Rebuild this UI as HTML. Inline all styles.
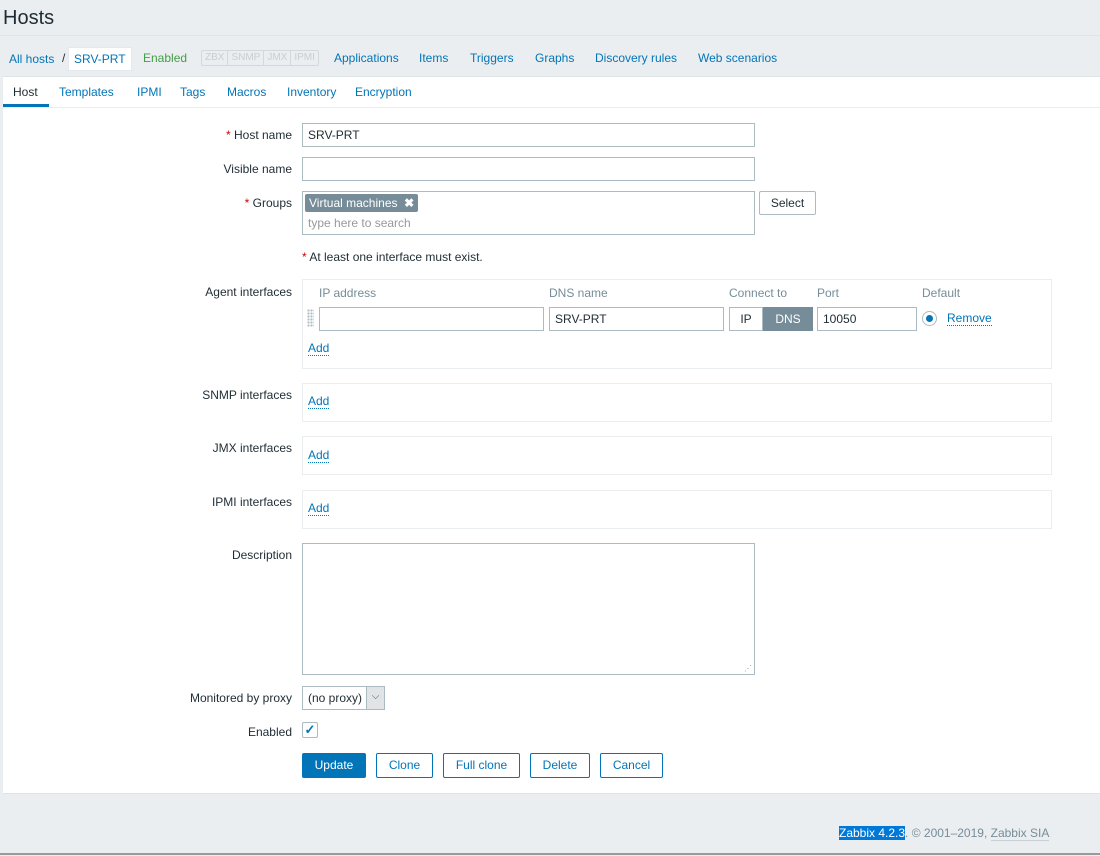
<!DOCTYPE html>
<html><head><meta charset="utf-8"><style>
*{box-sizing:border-box;margin:0;padding:0}
body{width:1100px;height:856px;background:#ebeef0;font-family:"Liberation Sans",Arial,sans-serif;font-size:12px;color:#1f2c33;position:relative;overflow:hidden}
.a{position:absolute;white-space:nowrap}
.lnk{color:#0275b8}
.inp{position:absolute;border:1px solid #acbbc2;background:#fff;height:24px;padding:4px 5px;font-size:12px;line-height:14px}
.lbl{position:absolute;right:808px;text-align:right;white-space:nowrap}
.box{position:absolute;left:302px;width:750px;border:1px solid #ebeef0;background:#fff}
.add{position:absolute;color:#0275b8;border-bottom:1px dotted #0275b8;line-height:13px}
.btn{position:absolute;top:753px;height:25px;border:1px solid #0275b8;color:#0275b8;background:#fff;text-align:center;line-height:23px;border-radius:2px}
.red{color:#d40000}
</style></head><body>
<div class="a" style="left:3px;top:7px;font-size:20px;color:#1f2c33">Hosts</div>
<div class="a" style="left:0;top:35px;width:1100px;border-top:1px solid #dfe4e7"></div>
<div class="a lnk" style="left:9px;top:52px">All hosts</div>
<div class="a" style="left:62px;top:51px">/</div>
<div class="a lnk" style="left:68px;top:47px;background:#fff;border:1px solid #e6e9eb;padding:4px 5px">SRV-PRT</div>
<div class="a" style="left:143px;top:51px;color:#429e47">Enabled</div>
<div class="a" style="left:201px;top:50px;height:16px;border:1px solid #d3d8db;border-radius:2px;font-size:10px;color:#c9ced1;line-height:14px;display:flex">
<span style="padding:0 3px;border-right:1px solid #d3d8db">ZBX</span><span style="padding:0 3px;border-right:1px solid #d3d8db">SNMP</span><span style="padding:0 3px;border-right:1px solid #d3d8db">JMX</span><span style="padding:0 3px">IPMI</span></div>
<div class="a lnk" style="left:334px;top:51px">Applications</div>
<div class="a lnk" style="left:419px;top:51px">Items</div>
<div class="a lnk" style="left:470px;top:51px">Triggers</div>
<div class="a lnk" style="left:535px;top:51px">Graphs</div>
<div class="a lnk" style="left:595px;top:51px">Discovery rules</div>
<div class="a lnk" style="left:698px;top:51px">Web scenarios</div>

<div class="a" style="left:3px;top:76px;width:1097px;height:718px;background:#fff;border-top:1px solid #dfe4e7;border-bottom:1px solid #dfe4e7"></div>
<div class="a" style="left:3px;top:107px;width:1097px;border-top:1px solid #ebeef0"></div>
<div class="a" style="left:3px;top:104px;width:46px;height:3px;background:#0275b8"></div>
<div class="a" style="left:13px;top:85px">Host</div>
<div class="a lnk" style="left:59px;top:85px">Templates</div>
<div class="a lnk" style="left:137px;top:85px">IPMI</div>
<div class="a lnk" style="left:180px;top:85px">Tags</div>
<div class="a lnk" style="left:227px;top:85px">Macros</div>
<div class="a lnk" style="left:287px;top:85px">Inventory</div>
<div class="a lnk" style="left:355px;top:85px">Encryption</div>

<div class="lbl" style="top:128px"><span class="red">*</span> Host name</div>
<div class="inp" style="left:302px;top:123px;width:453px">SRV-PRT</div>
<div class="lbl" style="top:162px">Visible name</div>
<div class="inp" style="left:302px;top:157px;width:453px"></div>
<div class="lbl" style="top:196px"><span class="red">*</span> Groups</div>
<div class="a" style="left:302px;top:191px;width:453px;height:44px;border:1px solid #acbbc2;background:#fff"></div>
<div class="a" style="left:305px;top:194px;height:18px;background:#768d99;color:#fff;padding:2px 4px;line-height:14px;border-radius:2px">Virtual machines &nbsp;<b>✖</b></div>
<div class="a" style="left:308px;top:216px;color:#999">type here to search</div>
<div class="a" style="left:759px;top:191px;width:57px;height:24px;border:1px solid #acbbc2;border-radius:2px;text-align:center;line-height:22px;background:#fff">Select</div>
<div class="a" style="left:302px;top:250px"><span class="red">*</span> At least one interface must exist.</div>

<div class="lbl" style="top:285px">Agent interfaces</div>
<div class="box" style="top:279px;height:90px"></div>
<div class="a" style="left:319px;top:286px;color:#768d99">IP address</div>
<div class="a" style="left:549px;top:286px;color:#768d99">DNS name</div>
<div class="a" style="left:729px;top:286px;color:#768d99">Connect to</div>
<div class="a" style="left:817px;top:286px;color:#768d99">Port</div>
<div class="a" style="left:922px;top:286px;color:#768d99">Default</div>
<div class="a" style="left:307px;top:309px;width:7px;height:18px;background:radial-gradient(circle,#acbbc2 1px,transparent 1.2px) 0 0/3px 3px"></div>
<div class="inp" style="left:319px;top:307px;width:225px"></div>
<div class="inp" style="left:549px;top:307px;width:175px">SRV-PRT</div>
<div class="a" style="left:729px;top:307px;width:34px;height:24px;border:1px solid #acbbc2;text-align:center;line-height:22px">IP</div>
<div class="a" style="left:763px;top:307px;width:50px;height:24px;background:#768d99;color:#fff;text-align:center;line-height:24px">DNS</div>
<div class="inp" style="left:817px;top:307px;width:100px">10050</div>
<div class="a" style="left:922px;top:311px;width:15px;height:15px;border:1px solid #acbbc2;border-radius:50%;background:#fff"><div style="margin:3px;width:7px;height:7px;border-radius:50%;background:#0275b8"></div></div>
<div class="add" style="left:947px;top:312px">Remove</div>
<div class="add" style="left:308px;top:342px">Add</div>

<div class="lbl" style="top:388px">SNMP interfaces</div>
<div class="box" style="top:383px;height:39px"></div>
<div class="add" style="left:308px;top:395px">Add</div>
<div class="lbl" style="top:441px">JMX interfaces</div>
<div class="box" style="top:436px;height:39px"></div>
<div class="add" style="left:308px;top:449px">Add</div>
<div class="lbl" style="top:495px">IPMI interfaces</div>
<div class="box" style="top:490px;height:39px"></div>
<div class="add" style="left:308px;top:502px">Add</div>

<div class="lbl" style="top:548px">Description</div>
<div class="a" style="left:302px;top:543px;width:453px;height:132px;border:1px solid #acbbc2;background:#fff"></div>
<div class="a" style="left:744px;top:664px;font-size:8px;color:#999">⋰</div>

<div class="lbl" style="top:691px">Monitored by proxy</div>
<div class="a" style="left:302px;top:686px;width:83px;height:24px;border:1px solid #acbbc2;background:#fff;padding:4px 5px">(no proxy)</div>
<div class="a" style="left:366px;top:687px;width:18px;height:22px;background:#e0e4e6;border-left:1px solid #acbbc2;text-align:center;color:#555;font-size:10px;line-height:20px">⌵</div>
<div class="lbl" style="top:725px">Enabled</div>
<div class="a" style="left:302px;top:722px;width:16px;height:16px;border:1px solid #acbbc2;border-radius:2px;color:#0275b8;font-size:13px;line-height:14px;text-align:center;font-weight:bold">✓</div>

<div class="btn" style="left:302px;width:64px;background:#0275b8;color:#fff">Update</div>
<div class="btn" style="left:376px;width:57px">Clone</div>
<div class="btn" style="left:443px;width:77px">Full clone</div>
<div class="btn" style="left:530px;width:60px">Delete</div>
<div class="btn" style="left:600px;width:63px">Cancel</div>

<div class="a" style="left:839px;top:826px;color:#768d99"><span style="background:#0078d7;color:#fff">Zabbix 4.2.3</span>. © 2001–2019, <span style="border-bottom:1px solid #c8d0d4">Zabbix SIA</span></div>
<div class="a" style="left:0;top:853px;width:1100px;border-top:2px solid #9a9a9a"></div>
</body></html>
